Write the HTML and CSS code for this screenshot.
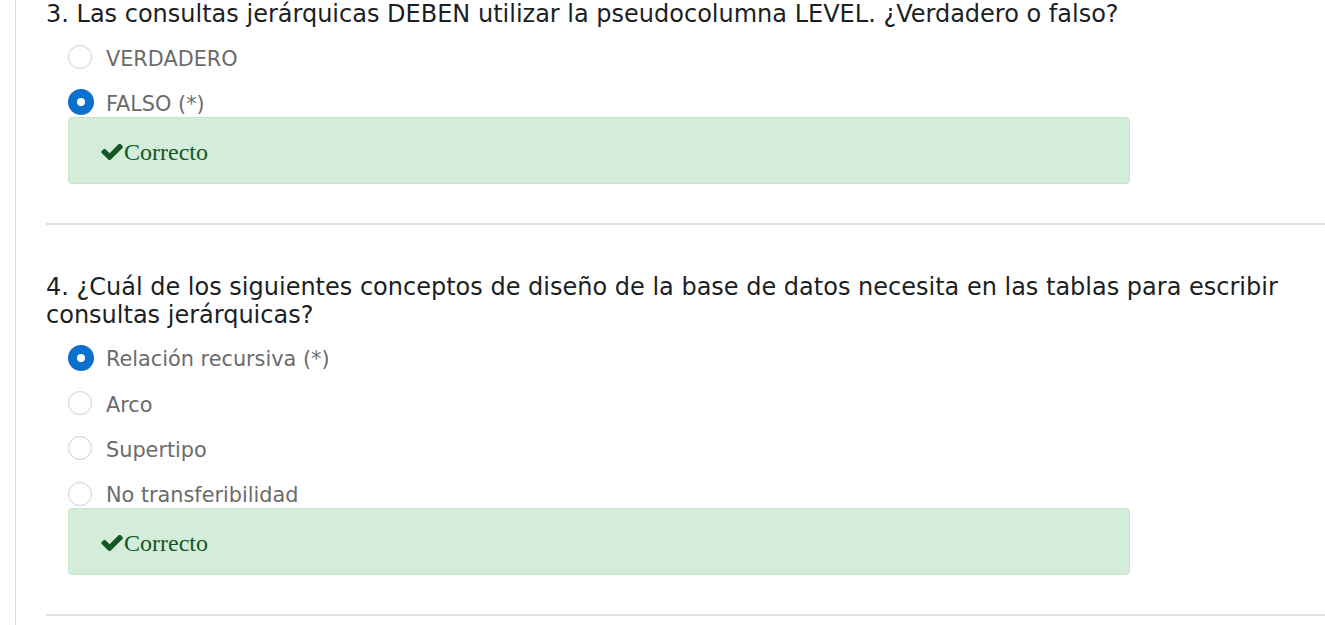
FILE: index.html
```html
<!DOCTYPE html>
<html lang="es">
<head>
<meta charset="utf-8">
<link rel="stylesheet" href="styles.css">
</head>
<body>
<div class="page">
  <section class="question">
    <div class="q-title">3. Las consultas jerárquicas DEBEN utilizar la pseudocolumna LEVEL. ¿Verdadero o falso?</div>
    <ul class="options">
      <li class="option"><span class="radio"></span><span class="label">VERDADERO</span></li>
      <li class="option"><span class="radio checked"></span><span class="label">FALSO (*)</span></li>
    </ul>
    <div class="alert"><svg class="check" viewBox="100 395 1580 1070" width="22" height="16"><path d="M1671 566q0 40-28 68l-724 724-136 136q-28 28-68 28t-68-28l-136-136-362-362q-28-28-28-68t28-68l136-136q28-28 68-28t68 28l294 295 656-657q28-28 68-28t68 28l136 136q28 28 28 68z" fill="#155724"/></svg>Correcto</div>
  </section>
  <hr class="sep">
  <section class="question q4">
    <div class="q-title">4. ¿Cuál de los siguientes conceptos de diseño de la base de datos necesita en las tablas para escribir consultas jerárquicas?</div>
    <ul class="options">
      <li class="option"><span class="radio checked"></span><span class="label">Relación recursiva (*)</span></li>
      <li class="option"><span class="radio"></span><span class="label">Arco</span></li>
      <li class="option"><span class="radio"></span><span class="label">Supertipo</span></li>
      <li class="option"><span class="radio"></span><span class="label">No transferibilidad</span></li>
    </ul>
    <div class="alert"><svg class="check" viewBox="100 395 1580 1070" width="22" height="16"><path d="M1671 566q0 40-28 68l-724 724-136 136q-28 28-68 28t-68-28l-136-136-362-362q-28-28-28-68t28-68l136-136q28-28 68-28t68 28l294 295 656-657q28-28 68-28t68 28l136 136q28 28 28 68z" fill="#155724"/></svg>Correcto</div>
  </section>
  <hr class="sep">
</div>
</body>
</html>
```

FILE: styles.css
```css
html, body {
  margin: 0;
  padding: 0;
  background: #fff;
}
body {
  font-family: "DejaVu Sans", Verdana, sans-serif;
  overflow: hidden;
}
.page {
  margin-left: 15px;
  border-left: 1px solid #dcdcdc;
  padding-left: 30px;
  min-height: 625px;
}
.q-title {
  font-size: 24px;
  line-height: 28px;
  color: #1c1f23;
}
.q4 {
  padding-top: 48px;
}
.options {
  list-style: none;
  margin: 0;
  padding: 0 0 0 22px;
}
.option {
  display: flex;
  align-items: center;
  height: 45.3px;
}
.options .option:first-child {
  margin-top: 6.5px;
}
.radio {
  width: 24px;
  height: 24px;
  border: 1px solid #cfcfcf;
  border-radius: 50%;
  box-sizing: border-box;
  margin-right: 14px;
  flex: none;
  background: #fff;
}
.radio.checked {
  width: 26px;
  height: 26px;
  border: 9px solid #0b6fce;
  margin-right: 12px;
}
.label {
  font-size: 20.8px;
  color: #6b6b6b;
  padding-top: 3px;
}
.alert {
  margin: -8px 0 0 22px;
  width: 1062px;
  height: 67px;
  box-sizing: border-box;
  background: #d4edda;
  border: 1px solid #c3e6cb;
  border-radius: 4px;
  display: flex;
  align-items: center;
  padding: 3px 0 0 32px;
  font-family: "Liberation Serif", "Times New Roman", serif;
  font-size: 24px;
  color: #155724;
}
.check {
  margin-right: 1px;
}
.sep {
  margin: 38.5px 0 0 0;
  border: 0;
  height: 2px;
  background: #dee2e6;
}
```
